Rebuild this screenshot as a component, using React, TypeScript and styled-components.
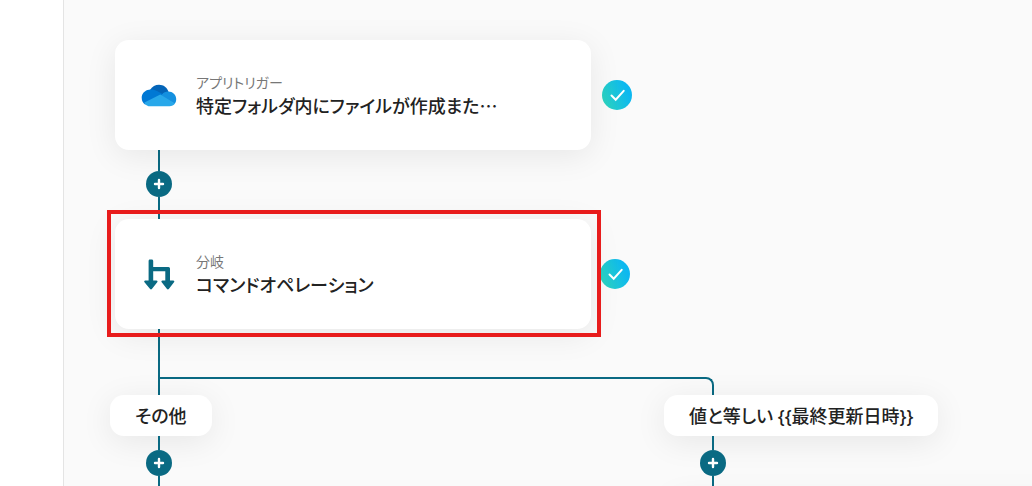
import React from 'react';
import styled, { createGlobalStyle } from 'styled-components';

const teal = '#0a6a83';
const softShadow = '0 6px 32px rgba(0, 0, 0, 0.08)';

const GlobalStyle = createGlobalStyle`
  *, *::before, *::after { box-sizing: border-box; }
  body {
    margin: 0;
    background: #fafafa;
    color: #222;
    font-family: "Noto Sans CJK JP", sans-serif;
    font-feature-settings: "palt";
  }
  button { font: inherit; font-feature-settings: inherit; color: inherit; border: 0; cursor: pointer; }
`;

const Page = styled.div`
  display: grid;
  grid-template-columns: 64px minmax(0, 1fr);
  height: 100vh;
`;

const Sidebar = styled.aside`
  background: #fff;
  border-right: 1px solid #e4e4e4;
`;

const Canvas = styled.main`
  overflow: hidden;
  padding: 40px 0 0 46px;
`;

const NodeRow = styled.div<{ $gap: number }>`
  display: flex;
  align-items: center;
  gap: ${({ $gap }) => $gap}px;
  padding-left: 5px;
`;

const CardFrame = styled.div`
  position: relative;
  flex: none;
`;

const Highlight = styled.div`
  position: absolute;
  inset: -9px -10px -8px -8px;
  border: 4px solid #e81c1c;
  pointer-events: none;
`;

const Card = styled.button`
  display: flex;
  align-items: center;
  gap: 17px;
  width: 476px;
  height: 110px;
  padding: 0 24px;
  border-radius: 14px;
  background: #fff;
  box-shadow: ${softShadow};
  text-align: left;
`;

const Texts = styled.span`
  display: flex;
  flex-direction: column;
  min-width: 0;
`;

const Kind = styled.span`
  font-size: 14px;
  line-height: 20px;
  color: #777;
`;

const Title = styled.span`
  font-size: 18px;
  line-height: 26px;
  font-weight: 500;
`;

const Stem = styled.div<{ $height: number }>`
  width: 2px;
  height: ${({ $height }) => $height}px;
  margin-left: 48px;
  background: ${teal};
`;

const Link = styled.div`
  display: flex;
  flex-direction: column;
  align-items: center;
  width: 98px;
`;

const LinkLine = styled.span<{ $height: number }>`
  width: 2px;
  height: ${({ $height }) => $height}px;
  background: ${teal};
`;

const AddButton = styled.button`
  display: grid;
  place-items: center;
  width: 26px;
  height: 26px;
  padding: 0;
  border-radius: 50%;
  background: ${teal};
`;

const Fork = styled.div`
  width: 556px;
  height: 18px;
  margin-left: 48px;
  border: 2px solid ${teal};
  border-bottom: 0;
  border-top-right-radius: 8px;
`;

const Branches = styled.div`
  display: grid;
  grid-template-columns: 554px 1fr;
`;

const Pill = styled.button`
  height: 41px;
  padding: 0 25px;
  border-radius: 14px;
  background: #fff;
  box-shadow: ${softShadow};
  font-family: "Noto Sans", "Noto Sans CJK JP", sans-serif;
  font-size: 18px;
  line-height: 26px;
  font-weight: 500;
  white-space: nowrap;
`;

function CloudIcon() {
  return (
    <svg width="40" height="40" viewBox="0 -1 40 40" aria-hidden="true">
      <path d="M11 14C13 10.500 16.500 8.800 20 8.800c4.500 0 8.300 2.800 9.500 7.200l-7 5z" fill="#0364b8" />
      <path d="M10 13.700c3-.6 5.500-.1 8 1.300L27 20 6 28.500C4 27 2.700 25 2.700 21.700 2.700 17.500 6 14.200 10 13.700z" fill="#0078d4" />
      <path d="M23 18.500c1.500-2.200 3.800-3 6.200-3 4.500 0 8 3.200 8 7.500 0 2-.5 3.500-1.500 4.800L21 20z" fill="#1490df" />
      <path d="M21.300 18.400L36 27.500c-1.300 1.800-3.200 2.800-5.500 2.800H11c-2.200 0-4-.9-5.500-2.800-.2-.4-.3-.8 0-1z" fill="#28a8ea" />
    </svg>
  );
}

function BranchIcon() {
  return (
    <svg width="40" height="40" viewBox="0 0 40 40" fill={teal} aria-hidden="true">
      <path d="M10.900 5.500h1.800c.9 0 1.500.6 1.500 1.500v6H29.500a1.500 1.500 0 0 1 1.500 1.500v12h3.200c1 0 1.500 1 .8 1.700l-5.200 6.900c-.5.600-1.300.6-1.800 0l-5.300-6.900c-.6-.7-.2-1.700.8-1.700h2.800v-9.300H14.200v9.300h3.200c1 0 1.500 1 .8 1.700l-5.300 6.900c-.5.600-1.300.6-1.800 0l-5.600-6.900c-.6-.7-.2-1.700.8-1.700h3.300V7c0-.9.500-1.500 1.300-1.500z" />
    </svg>
  );
}

function DoneBadge({ id }: { id: string }) {
  return (
    <svg width="30" height="30" viewBox="0 0 30 30" role="img" aria-label="完了">
      <defs>
        <linearGradient id={id} x1="0" y1="0.7" x2="1" y2="0.3">
          <stop offset="0" stopColor="#2dd4bf" />
          <stop offset="0.85" stopColor="#0db8f0" />
        </linearGradient>
      </defs>
      <circle cx="15" cy="15" r="15" fill={`url(#${id})`} />
      <path d="M9.500 15.500l4.200 4.200L21.700 10.800" fill="none" stroke="#fff" strokeWidth="2" strokeLinecap="round" />
    </svg>
  );
}

function Add() {
  return (
    <AddButton aria-label="追加">
      <svg width="26" height="26" viewBox="0 0 26 26" aria-hidden="true">
        <path d="M13 9v8M9 13h8" stroke="#fff" strokeWidth="2.400" strokeLinecap="round" />
      </svg>
    </AddButton>
  );
}

function Branch({ label, children }: { label: string; children?: React.ReactNode }) {
  return (
    <div>
      <Pill>{label}</Pill>
      <Link>
        <LinkLine $height={14} />
        <Add />
        <LinkLine $height={18} />
      </Link>
      {children}
    </div>
  );
}

export default function App() {
  return (
    <Page>
      <GlobalStyle />
      <Sidebar />
      <Canvas>
        <NodeRow $gap={11}>
          <CardFrame>
            <Card>
              <CloudIcon />
              <Texts>
                <Kind>アプリトリガー</Kind>
                <Title>特定フォルダ内にファイルが作成また…</Title>
              </Texts>
            </Card>
          </CardFrame>
          <DoneBadge id="done-trigger" />
        </NodeRow>
        <Link>
          <LinkLine $height={21} />
          <Add />
          <LinkLine $height={22} />
        </Link>
        <NodeRow $gap={9}>
          <CardFrame>
            <Card>
              <BranchIcon />
              <Texts>
                <Kind>分岐</Kind>
                <Title>コマンドオペレーション</Title>
              </Texts>
            </Card>
            <Highlight />
          </CardFrame>
          <DoneBadge id="done-branch" />
        </NodeRow>
        <Stem $height={48} />
        <Fork />
        <Branches>
          <Branch label="その他" />
          <Branch label="値と等しい {{最終更新日時}}">
            <NodeRow $gap={9}>
              <CardFrame>
                <Card aria-label="次のステップ" />
              </CardFrame>
            </NodeRow>
          </Branch>
        </Branches>
      </Canvas>
    </Page>
  );
}
